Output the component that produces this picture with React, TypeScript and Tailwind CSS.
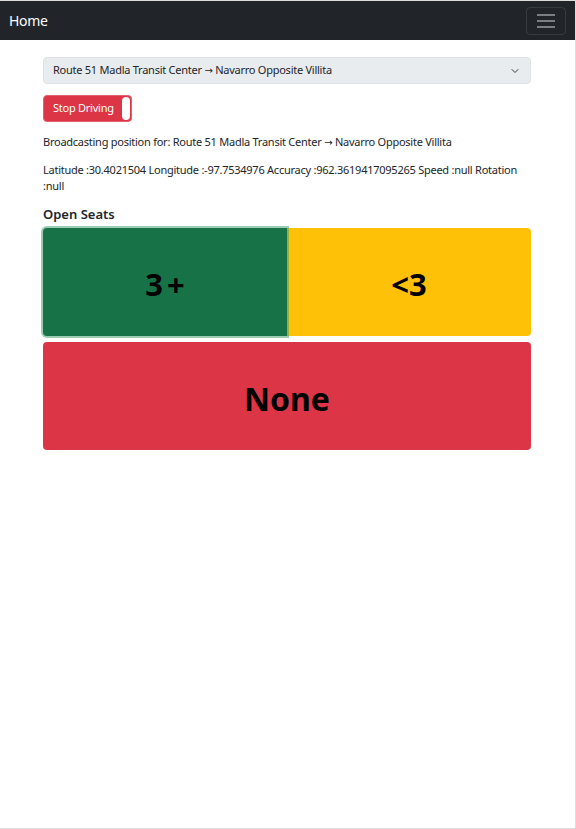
import { useState } from 'react';

function Route() {
  return (
    <>
      Route 51 Madla Transit Center{' '}
      <span style={{ fontFamily: '"DejaVu Sans", sans-serif' }} className="text-[10px] leading-none">→</span>{' '}
      Navarro Opposite Villita
    </>
  );
}

export default function App() {
  const [seats, setSeats] = useState('3+');

  return (
    <div
      className="min-h-[829px] bg-white text-[#212529] border-t border-r border-b border-[#dcdcdc] flex flex-col"
      style={{ fontFamily: '"Noto Sans", "Open Sans", sans-serif' }}
    >
      {/* Navbar */}
      <nav className="h-[39px] bg-[#212529] flex items-center justify-between pl-[9px] pr-[9px]">
        <span className="text-white text-[14px] tracking-[-0.3px] leading-none">Home</span>
        <button className="w-[40px] h-[28px] rounded-[4px] border border-white/10 flex items-center justify-center">
          <svg width="20" height="16" viewBox="0 0 20 16">
            <path d="M1 2h18M1 8h18M1 14h18" stroke="rgba(255,255,255,0.55)" strokeWidth="1.6" />
          </svg>
        </button>
      </nav>

      <div className="pl-[43px] pr-[44px] pt-[17px] flex-1 text-[11px] tracking-[-0.25px]">
        {/* Route select */}
        <div className="h-[27px] bg-[#e9ecef] border border-[#dee2e6] rounded-[4px] flex items-center justify-between pl-[9px] pr-[10px]">
          <span><Route /></span>
          <svg width="10" height="8" viewBox="0 0 16 16">
            <path d="M2 5l6 6 6-6" fill="none" stroke="#343a40" strokeWidth="2" strokeLinecap="round" strokeLinejoin="round" />
          </svg>
        </div>

        {/* Stop driving toggle */}
        <div className="mt-[11px] w-[89px] h-[27px] bg-[#dc3545] rounded-[4px] flex items-center justify-between pl-[9px] pr-[1px] border border-[#e4606d]">
          <span className="text-white">Stop Driving</span>
          <span className="w-[8px] h-[23px] bg-white rounded-[4px]"></span>
        </div>

        <p className="mt-[12px] h-[16px] leading-[16px]">Broadcasting position for: <Route /></p>
        <p className="mt-[12px] leading-[16px]">
          Latitude :30.4021504 Longitude :-97.7534976 Accuracy :962.3619417095265 Speed :null Rotation :null
        </p>

        <h5 className="mt-[12px] text-[13px] tracking-normal font-semibold leading-[16px]">Open Seats</h5>

        <div className="mt-[6px] flex tracking-normal">
          <button
            onClick={() => setSeats('3+')}
            className={`flex-1 h-[108px] pt-[4px] bg-[#177347] rounded-l-[4px] text-black text-[31px] font-bold ${
              seats === '3+' ? 'shadow-[0_0_0_2px_rgba(60,153,110,0.5)] relative' : ''
            }`}
          >
            3<span className="ml-[4px]">+</span>
          </button>
          <button
            onClick={() => setSeats('<3')}
            className="flex-1 h-[108px] pt-[4px] bg-[#ffc107] rounded-r-[4px] text-black text-[31px] font-bold"
          >
            &lt;3
          </button>
        </div>
        <button
          onClick={() => setSeats('None')}
          className="mt-[6px] w-full h-[108px] pt-[5px] bg-[#dc3545] rounded-[4px] text-black text-[32px] font-bold tracking-normal"
        >
          None
        </button>
      </div>
    </div>
  );
}
